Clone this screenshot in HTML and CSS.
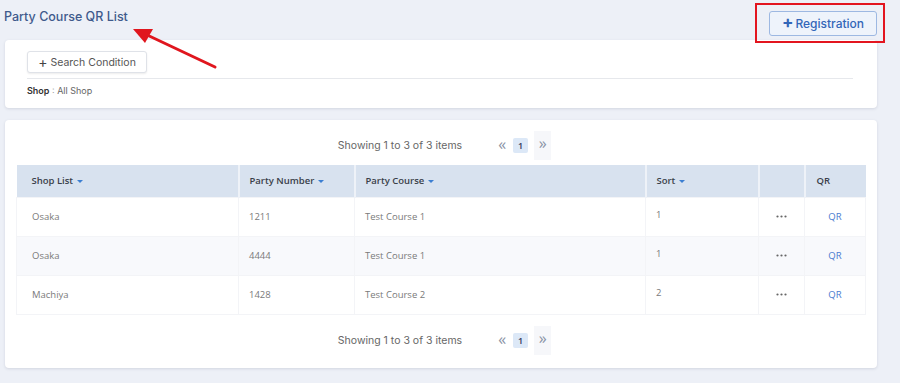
FILE: index.html
```html
<!DOCTYPE html>
<html lang="en">
<head>
    <meta charset="UTF-8">
    <meta name="viewport" content="width=device-width, initial-scale=1.0">
    <title>Party Course QR List</title>
    <link rel="stylesheet" href="styles.css">
</head>
<body>
    <div class="page">
        <!-- Page header -->
        <div class="page-header">
            <h1 class="page-title">Party Course QR List</h1>
            <div class="mark-box">
                <button class="reg-btn"><span class="plus">+</span>Registration</button>
            </div>
        </div>

        <!-- Search card -->
        <div class="card search-card">
            <button class="cond-btn"><span class="cond-plus">+</span>Search Condition</button>
            <div class="cond-line"></div>
            <div class="cond-text"><b>Shop</b> <span class="colon">:</span> All Shop</div>
        </div>

        <!-- List card -->
        <div class="card list-card">
            <div class="pager-row">
                <span class="pager-info">Showing 1 to 3 of 3 items</span>
                <span class="pager">
                    <span class="pg-arrow">&laquo;</span>
                    <span class="pg-num">1</span>
                    <span class="pg-arrow pg-next">&raquo;</span>
                </span>
            </div>

            <table class="grid">
                <colgroup>
                    <col style="width:222px">
                    <col style="width:116px">
                    <col style="width:291px">
                    <col style="width:113px">
                    <col style="width:46px">
                    <col style="width:61px">
                </colgroup>
                <thead>
                    <tr>
                        <th>Shop List <span class="caret"></span></th>
                        <th>Party Number <span class="caret"></span></th>
                        <th>Party Course <span class="caret"></span></th>
                        <th>Sort <span class="caret"></span></th>
                        <th></th>
                        <th>QR</th>
                    </tr>
                </thead>
                <tbody>
                    <tr>
                        <td>Osaka</td>
                        <td>1211</td>
                        <td>Test Course 1</td>
                        <td class="top">1</td>
                        <td class="dots"><svg width="11" height="3" viewBox="0 0 11 3"><circle cx="1.5" cy="1.5" r="1.1"/><circle cx="5.5" cy="1.5" r="1.1"/><circle cx="9.5" cy="1.5" r="1.1"/></svg></td>
                        <td class="qr">QR</td>
                    </tr>
                    <tr class="alt">
                        <td>Osaka</td>
                        <td>4444</td>
                        <td>Test Course 1</td>
                        <td class="top">1</td>
                        <td class="dots"><svg width="11" height="3" viewBox="0 0 11 3"><circle cx="1.5" cy="1.5" r="1.1"/><circle cx="5.5" cy="1.5" r="1.1"/><circle cx="9.5" cy="1.5" r="1.1"/></svg></td>
                        <td class="qr">QR</td>
                    </tr>
                    <tr>
                        <td>Machiya</td>
                        <td>1428</td>
                        <td>Test Course 2</td>
                        <td class="top">2</td>
                        <td class="dots"><svg width="11" height="3" viewBox="0 0 11 3"><circle cx="1.5" cy="1.5" r="1.1"/><circle cx="5.5" cy="1.5" r="1.1"/><circle cx="9.5" cy="1.5" r="1.1"/></svg></td>
                        <td class="qr">QR</td>
                    </tr>
                </tbody>
            </table>

            <div class="pager-row bottom">
                <span class="pager-info">Showing 1 to 3 of 3 items</span>
                <span class="pager">
                    <span class="pg-arrow">&laquo;</span>
                    <span class="pg-num">1</span>
                    <span class="pg-arrow pg-next">&raquo;</span>
                </span>
            </div>
        </div>

        <!-- annotation arrow -->
        <svg class="arrow" width="100" height="50" viewBox="0 0 100 50">
            <line x1="84" y1="40" x2="14" y2="7" stroke="#e0161e" stroke-width="3" stroke-linecap="round"/>
            <polygon points="2,2 22,2 14,16" fill="#e0161e"/>
        </svg>
    </div>
</body>
</html>
```

FILE: styles.css
```css
* { margin: 0; padding: 0; box-sizing: border-box; }

body {
    font-family: "Open Sans", "Noto Sans", sans-serif;
    background: #edf0f7;
    width: 900px;
    height: 383px;
    overflow: hidden;
}

.page {
    position: relative;
    padding-bottom: 15px;
}

.page-header {
    height: 40px;
    display: flex;
    justify-content: space-between;
    align-items: center;
    padding: 0 15px 0 4px;
}

.page-title {
    font-family: Inter, "Noto Sans", sans-serif;
    font-size: 12.5px;
    font-weight: 500;
    color: #3f5a8c;
    margin-top: -8px;
}

.mark-box {
    border: 2px solid #e3151f;
    width: 130px;
    height: 40px;
    padding: 6px 6px 5px 12px;
    margin-top: 6px;
}

.reg-btn {
    width: 108px;
    height: 25px;
    border: 1px solid #9db8e2;
    border-radius: 3px;
    background: #eef3fb;
    color: #3366b8;
    font-family: Inter, "Noto Sans", sans-serif;
    font-size: 12px;
    font-weight: 500;
    display: flex;
    align-items: center;
    justify-content: center;
    gap: 2px;
    cursor: pointer;
}

.reg-btn .plus {
    font-size: 17px;
    font-weight: 700;
    line-height: 1;
    margin-top: -2px;
}

.card {
    background: #fff;
    border-radius: 4px;
    margin: 0 23px 0 5px;
    box-shadow: 0 1px 3px rgba(60, 70, 100, 0.15);
}

.search-card {
    height: 68px;
    padding: 11px 24px 0 22px;
}

.cond-btn {
    width: 120px;
    height: 22px;
    border: 1px solid #dfe2e8;
    border-radius: 3px;
    background: #fff;
    color: #555;
    font-family: Inter, "Noto Sans", sans-serif;
    font-size: 10.5px;
    display: flex;
    align-items: center;
    justify-content: center;
    gap: 3px;
    box-shadow: 0 1px 2px rgba(0, 0, 0, 0.08);
}

.cond-plus {
    font-size: 14px;
    line-height: 1;
    color: #444;
}

.cond-line {
    height: 1px;
    background: #e6e8ec;
    margin: 5px 0 6px;
}

.cond-text {
    font-family: Inter, "Noto Sans", sans-serif;
    font-size: 9px;
    color: #666;
}

.cond-text b { color: #333; font-weight: 600; }
.cond-text .colon { color: #999; }

.list-card {
    margin-top: 12px;
    height: 248px;
    padding: 11px 12px 0 11px;
}

.pager-row {
    height: 29px;
    margin-bottom: 5px;
    display: flex;
    justify-content: center;
    align-items: center;
    padding-left: 8px;
}

.pager-row.bottom {
    margin-top: 11px;
}

.pager-info {
    font-family: Inter, "Noto Sans", sans-serif;
    font-size: 10.5px;
    color: #666;
    margin-right: 31px;
}

.pager {
    display: flex;
    align-items: center;
    height: 29px;
}

.pg-arrow {
    font-size: 16px;
    color: #8a93a6;
    width: 18px;
    text-align: center;
    line-height: 1;
    margin-top: -3px;
}

.pg-num {
    width: 15px;
    height: 15px;
    background: #dce8f7;
    color: #335;
    font-size: 9px;
    font-weight: 600;
    border-radius: 2px;
    display: flex;
    align-items: center;
    justify-content: center;
    margin: 0 6px 0 2px;
}

.pg-next {
    background: #f6f7fa;
    height: 29px;
    width: 17px;
    padding-top: 4px;
    margin-top: 0;
}

.grid {
    width: 849px;
    border-collapse: collapse;
    table-layout: fixed;
}

.grid th {
    background: #d8e2ef;
    height: 32px;
    text-align: left;
    font-size: 9.5px;
    font-weight: 600;
    color: #3a3f4a;
    padding: 0 10px;
    border-right: 2px solid #eef2f8;
}

.grid th:last-child { border-right: none; padding-left: 11px; }
.grid th:first-child, .grid td:first-child { padding-left: 15px; }

.caret {
    display: inline-block;
    width: 0;
    height: 0;
    border-left: 3px solid transparent;
    border-right: 3px solid transparent;
    border-top: 3px solid #3c7fd2;
    vertical-align: middle;
    margin-left: 1px;
}

.grid td {
    height: 39px;
    font-size: 9.5px;
    color: #7a7a7a;
    padding: 0 10px;
    border: 1px solid #f3f4f7;
}

.grid tr.alt td { background: #f8f9fc; }

.grid td.top {
    vertical-align: top;
    padding-top: 10px;
}

.grid td.dots {
    text-align: center;
    fill: #666;
    line-height: 0;
}

.grid td.qr {
    text-align: center;
    color: #4a7bd0;
}

.arrow {
    position: absolute;
    left: 131px;
    top: 27px;
}
```
